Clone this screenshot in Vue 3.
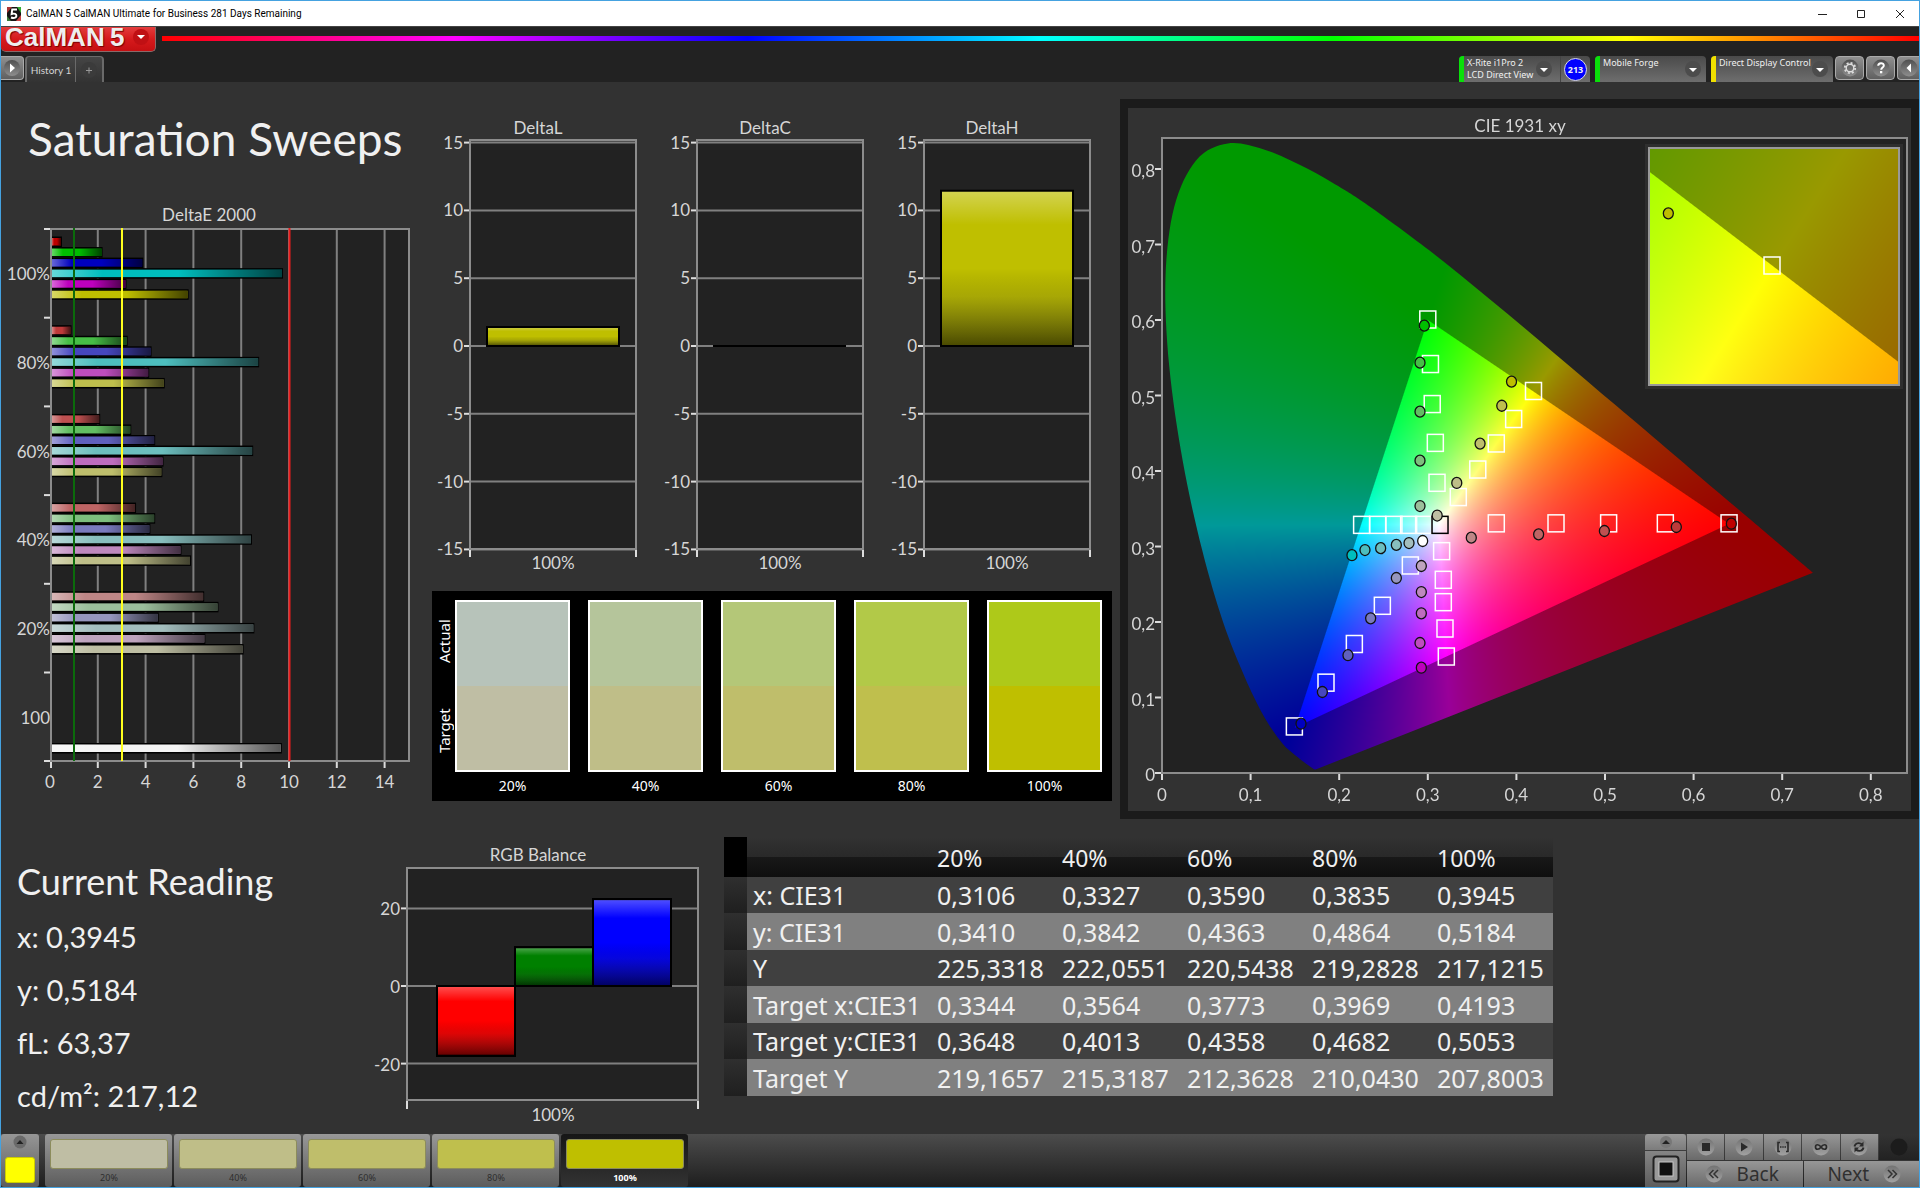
<script setup>
import { onMounted, ref } from 'vue'

const levels = ['20%', '40%', '60%', '80%', '100%']

/* ---------- DeltaE 2000 ---------- */
const deX = v => 50 + 23.9 * v
const deBand = 88.7
const deTop = 229
const floors = {
  r: [0, 58, 80, 100, 134],
  g: [0, 70, 98, 125, 155],
  b: [0, 70, 96, 122, 150],
  c: [0, 77, 108, 136, 163],
  m: [0, 77, 108, 136, 163],
  y: [0, 77, 108, 136, 163]
}
const hueColor = (hue, step) => {
  const low = floors[hue][step]
  const on = { r: 'r', g: 'g', b: 'b', c: 'gb', m: 'rb', y: 'rg' }[hue]
  return `rgb(${['r', 'g', 'b'].map(c => (on.includes(c) ? 190 : low)).join(',')})`
}
const deValues = [
  [0.5, 2.2, 3.9, 9.75, 3.2, 5.8],
  [0.9, 3.25, 4.25, 8.75, 4.15, 4.8],
  [2.1, 3.4, 4.4, 8.5, 4.75, 4.7],
  [3.6, 4.4, 4.2, 8.45, 5.5, 5.9],
  [6.45, 7.05, 4.55, 8.55, 6.5, 8.1]
]
const hues = ['r', 'g', 'b', 'c', 'm', 'y']
const deBars = []
deValues.forEach((row, i) =>
  row.forEach((v, j) => {
    deBars.push({ y: deTop + deBand * i + 7.5 + 10.55 * j, w: 23.9 * v - 2, fill: hueColor(hues[j], i) })
  })
)
deBars.push({ y: deTop + deBand * 5 + 70.5, w: 23.9 * 9.7 - 2, fill: '#f4f4f4' })
const deLabels = ['100%', '80%', '60%', '40%', '20%', '100']
const deTicks = [0, 2, 4, 6, 8, 10, 12, 14]

/* ---------- Delta L / C / H ---------- */
const deltas = [
  { name: 'DeltaL', value: 1.4 },
  { name: 'DeltaC', value: 0.05 },
  { name: 'DeltaH', value: 11.45 }
]
const dTicks = [15, 10, 5, 0, -5, -10, -15]
const dY = v => 236 - 13.56 * v

/* ---------- RGB balance ---------- */
const rgbBars = [
  { x: 67, value: -18, fill: '#ff0000' },
  { x: 145, value: 10, fill: '#008000' },
  { x: 223, value: 22.4, fill: '#0000ff' }
]
const rgbY = v => 144 - 3.88 * v

/* ---------- Colour swatches ---------- */
const swatches = [
  { label: '20%', actual: '#b7c3ba', target: '#bfbea4' },
  { label: '40%', actual: '#b5c59b', target: '#bfbe88' },
  { label: '60%', actual: '#b4c778', target: '#bfbe6b' },
  { label: '80%', actual: '#b2c948', target: '#bfbf4d' },
  { label: '100%', actual: '#aec919', target: '#bfbf00' }
]

/* ---------- Table ---------- */
const rows = [
  ['x: CIE31', '0,3106', '0,3327', '0,3590', '0,3835', '0,3945'],
  ['y: CIE31', '0,3410', '0,3842', '0,4363', '0,4864', '0,5184'],
  ['Y', '225,3318', '222,0551', '220,5438', '219,2828', '217,1215'],
  ['Target x:CIE31', '0,3344', '0,3564', '0,3773', '0,3969', '0,4193'],
  ['Target y:CIE31', '0,3648', '0,4013', '0,4358', '0,4682', '0,5053'],
  ['Target Y', '219,1657', '215,3187', '212,3628', '210,0430', '207,8003']
]

const readings = ['x: 0,3945', 'y: 0,5184', 'fL: 63,37', 'cd/m²: 217,12']

/* ---------- CIE 1931 diagram ---------- */
const W = 783
const H = 703
const cx = x => 34 + 886 * x
const cy = y => 665 - 755 * y
const inset = { x: 521, y: 40, w: 250, h: 237 }
const ix = x => 645 + 4180 * (x - 0.4193)
const iy = y => 158 - 4020 * (y - 0.5053)
const xTicks = ['0', '0,1', '0,2', '0,3', '0,4', '0,5', '0,6', '0,7', '0,8']

const targets = [
  [0.3, 0.6], [0.303, 0.541], [0.305, 0.488], [0.3085, 0.4366], [0.3104, 0.3837],
  [0.4193, 0.5053], [0.3969, 0.4682], [0.3773, 0.4358], [0.3564, 0.4013], [0.3344, 0.3648],
  [0.3773, 0.33], [0.4447, 0.33], [0.5041, 0.33], [0.5681, 0.33], [0.64, 0.33],
  [0.3156, 0.2932], [0.3175, 0.2552], [0.3175, 0.2256], [0.3194, 0.1907], [0.3209, 0.1536],
  [0.2803, 0.2742], [0.2487, 0.2208], [0.2171, 0.1702], [0.1851, 0.119], [0.1494, 0.061],
  [0.2253, 0.328], [0.2434, 0.328], [0.2618, 0.328], [0.2784, 0.328], [0.2953, 0.328]
]
const measured = {
  g: [[0.2961, 0.5925], [0.2912, 0.5435], [0.2912, 0.4786], [0.2912, 0.4137], [0.2912, 0.3536]],
  y: [[0.3945, 0.5184], [0.3835, 0.4864], [0.359, 0.4363], [0.3327, 0.3842], [0.3106, 0.341]],
  r: [[0.6426, 0.3302], [0.5805, 0.3258], [0.4993, 0.3205], [0.4251, 0.3161], [0.3491, 0.3117]],
  m: [[0.2927, 0.1395], [0.2912, 0.1722], [0.2927, 0.2115], [0.2927, 0.2397], [0.2927, 0.2742]],
  b: [[0.1569, 0.0653], [0.181, 0.1073], [0.2099, 0.156], [0.2355, 0.2049], [0.2645, 0.2583]],
  c: [[0.2144, 0.2885], [0.2291, 0.2953], [0.2468, 0.2978], [0.2645, 0.3021], [0.2788, 0.3046]]
}
const dots = Object.entries(measured).flatMap(([hue, list]) =>
  list.map(([x, y], i) => ({ x, y, fill: hueColor(hue, i) }))
)
dots.push({ x: 0.2942, y: 0.3073, fill: '#fff' })

const locus = [
  [0.1741, 0.005], [0.1714, 0.0051], [0.1644, 0.0109], [0.1566, 0.0177], [0.144, 0.0297],
  [0.1355, 0.0399], [0.1241, 0.0578], [0.1096, 0.0868], [0.0913, 0.1327], [0.0687, 0.2007],
  [0.0454, 0.295], [0.0235, 0.4127], [0.0082, 0.5384], [0.0039, 0.6548], [0.0139, 0.7502],
  [0.0389, 0.812], [0.0743, 0.8338], [0.1142, 0.8262], [0.1547, 0.8059], [0.1929, 0.7816],
  [0.2296, 0.7543], [0.3016, 0.6923], [0.3731, 0.6245], [0.4441, 0.5547], [0.5125, 0.4866],
  [0.5752, 0.4242], [0.627, 0.3725], [0.6658, 0.334], [0.6915, 0.3083], [0.719, 0.2809], [0.7347, 0.2653]
]
const gamut = [[0.64, 0.33], [0.3, 0.6], [0.15, 0.06]]

// signed distance to the nearest gamut edge, positive inside
function edgeDistance(x, y, scale) {
  let d = Infinity
  for (let i = 0; i < 3; i++) {
    const [ax, ay] = gamut[i]
    const [bx, by] = gamut[(i + 1) % 3]
    const len = Math.hypot(bx - ax, by - ay)
    d = Math.min(d, (((bx - ax) * (y - ay) - (by - ay) * (x - ax)) / len) * scale)
  }
  return d
}

// linear RGB normalised to its strongest channel, dimmed outside the gamut
function chroma(x, y, scale) {
  const yy = Math.max(y, 0.0001)
  const X = x / yy
  const Z = (1 - x - y) / yy
  const lin = [
    3.2406 * X - 1.5372 - 0.4986 * Z,
    -0.9689 * X + 1.8758 + 0.0415 * Z,
    0.0557 * X - 0.204 + 1.057 * Z
  ].map(v => Math.max(0, v))
  const top = Math.max(...lin)
  const k = 0.6 + 0.4 * Math.min(1, Math.max(0, edgeDistance(x, y, scale) + 0.5))
  return lin.map(v => (255 * k * v) / top)
}

function field(w, h, toXY, scale) {
  const layer = document.createElement('canvas')
  layer.width = w
  layer.height = h
  const ctx = layer.getContext('2d')
  const img = ctx.createImageData(w, h)
  for (let j = 0; j < h; j++) {
    for (let i = 0; i < w; i++) {
      const [x, y] = toXY(i + 0.5, j + 0.5)
      const c = chroma(x, y, scale)
      const o = 4 * (j * w + i)
      img.data[o] = c[0]
      img.data[o + 1] = c[1]
      img.data[o + 2] = c[2]
      img.data[o + 3] = 255
    }
  }
  ctx.putImageData(img, 0, 0)
  return layer
}

const gamutCanvas = ref(null)
onMounted(() => {
  const ctx = gamutCanvas.value.getContext('2d')
  ctx.save()
  ctx.beginPath()
  const p = locus.map(([x, y]) => [cx(x), cy(y)])
  ctx.moveTo(...p[0])
  for (let i = 0; i < p.length - 1; i++) {
    const a = p[Math.max(0, i - 1)]
    const b = p[i]
    const c = p[i + 1]
    const d = p[Math.min(p.length - 1, i + 2)]
    ctx.bezierCurveTo(
      b[0] + (c[0] - a[0]) / 6, b[1] + (c[1] - a[1]) / 6,
      c[0] - (d[0] - b[0]) / 6, c[1] - (d[1] - b[1]) / 6,
      c[0], c[1]
    )
  }
  ctx.closePath()
  ctx.clip()
  ctx.drawImage(field(W, H, (px, py) => [(px - 34) / 886, (665 - py) / 755], 800), 0, 0)
  ctx.restore()
  const { x, y, w, h } = inset
  ctx.fillStyle = '#2e2e2e'
  ctx.fillRect(x - 4, y - 4, w + 8, h + 8)
  ctx.drawImage(
    field(w, h, (px, py) => [0.4193 + (px + x - 645) / 4180, 0.5053 + (158 - py - y) / 4020], 4100),
    x, y
  )
})
</script>

<template>
  <div class="window">
    <header class="titlebar">
      <svg class="app-icon" width="14" height="14" viewBox="0 0 14 14">
        <rect width="14" height="14" fill="#141414" />
        <path d="M0 0h5L0 6z" fill="#a33" />
        <path d="M14 0v6L10 0z" fill="#3a3" />
        <path d="M0 14v-5l4 5z" fill="#3a7a3a" />
        <path d="M14 14H9l5-6z" fill="#c44" />
        <path d="M10 2.500H5.200L4.600 7c3-1 5 0 4.800 2-.3 2-3 2.500-5.400 1.500" fill="none" stroke="#fff" stroke-width="1.900" />
      </svg>
      <span class="caption">CalMAN 5 CalMAN Ultimate for Business 281 Days Remaining</span>
      <div class="controls">
        <button aria-label="Minimize"><svg width="10" height="10"><path d="M1 5.500h9" stroke="#222" /></svg></button>
        <button aria-label="Maximize"><svg width="10" height="10"><path d="M1.500 1.500h7v7h-7z" fill="none" stroke="#222" /></svg></button>
        <button aria-label="Close"><svg width="10" height="10"><path d="M1 1l8 8M9 1l-8 8" stroke="#222" /></svg></button>
      </div>
    </header>

    <div class="brandbar">
      <button class="brand">
        <span class="brand-name">CalMAN&thinsp;5</span>
        <svg width="18" height="18" viewBox="0 0 18 18"><circle cx="9" cy="9" r="8" fill="#c01014" /><path d="M5 7h8l-4 4z" fill="#fff" /></svg>
      </button>
      <div class="spectrum"></div>
    </div>

    <div class="toolbar">
      <button class="tool open" aria-label="Open panel">
        <svg width="18" height="18" viewBox="0 0 18 18"><circle cx="9" cy="9" r="8" fill="url(#knob)" /><path d="M7 4.500v9l5-4.500z" fill="#fff" /></svg>
      </button>
      <nav class="tabs">
        <button class="tab">History 1</button>
        <button class="tab add" aria-label="Add tab">
          <svg width="18" height="18" viewBox="0 0 18 18"><circle cx="9" cy="9" r="8" fill="#3b3b3b" /><path d="M6 9.500h6M9 6.500v6" stroke="#999" /></svg>
        </button>
      </nav>
      <div class="devices">
        <button class="device meter">
          <i class="led green"></i>
          <span class="device-name">X-Rite i1Pro 2<br>LCD Direct View</span>
          <svg class="drop" width="18" height="18" viewBox="0 0 18 18"><circle cx="9" cy="9" r="8" fill="#4c4c4c" /><path d="M5 8h8l-4 4z" fill="#fff" /></svg>
          <span class="count"><b>213</b></span>
        </button>
        <button class="device source">
          <i class="led green"></i>
          <span class="device-name">Mobile Forge</span>
          <svg class="drop" width="18" height="18" viewBox="0 0 18 18"><circle cx="9" cy="9" r="8" fill="#4c4c4c" /><path d="M5 8h8l-4 4z" fill="#fff" /></svg>
        </button>
        <button class="device display">
          <i class="led yellow"></i>
          <span class="device-name">Direct Display Control</span>
          <svg class="drop" width="18" height="18" viewBox="0 0 18 18"><circle cx="9" cy="9" r="8" fill="#4c4c4c" /><path d="M5 8h8l-4 4z" fill="#fff" /></svg>
        </button>
        <button class="tool" aria-label="Settings">
          <svg width="18" height="18" viewBox="0 0 18 18">
            <circle cx="9" cy="9" r="8.500" fill="url(#knob)" />
            <circle cx="9" cy="9" r="3.800" fill="none" stroke="#ddd" stroke-width="1.400" />
            <circle cx="9" cy="9" r="5.200" fill="none" stroke="#ddd" stroke-width="1.800" stroke-dasharray="2 2.080" />
          </svg>
        </button>
        <button class="tool" aria-label="Help">
          <svg width="18" height="18" viewBox="0 0 18 18">
            <circle cx="9" cy="9" r="8.500" fill="url(#knob)" />
            <path d="M6.200 6.800C6.300 3.200 12 3.400 11.800 6.700c-.1 1.800-2.600 1.900-2.600 4" fill="none" stroke="#fff" stroke-width="2" />
            <rect x="8" y="12" width="2.300" height="2.300" fill="#fff" />
          </svg>
        </button>
        <button class="tool last" aria-label="Collapse">
          <svg width="18" height="18" viewBox="0 0 18 18"><circle cx="9" cy="9" r="8.500" fill="url(#knob)" /><path d="M11 4.500v9L6.500 9z" fill="#fff" /></svg>
        </button>
      </div>
    </div>

    <main class="workspace">
      <section class="upper">
        <div class="col-left">
          <h1>Saturation Sweeps</h1>
          <svg class="chart" viewBox="1 200 423 600">
            <defs>
              <linearGradient id="shadeH">
                <stop offset="0" stop-color="#fff" stop-opacity=".4" />
                <stop offset=".22" stop-color="#fff" stop-opacity="0" />
                <stop offset=".55" stop-color="#000" stop-opacity="0" />
                <stop offset="1" stop-color="#000" stop-opacity=".65" />
              </linearGradient>
              <linearGradient id="shadeV" x2="0" y2="1">
                <stop offset="0" stop-color="#fff" stop-opacity=".32" />
                <stop offset=".22" stop-color="#fff" stop-opacity="0" />
                <stop offset=".5" stop-color="#000" stop-opacity="0" />
                <stop offset=".68" stop-color="#222" stop-opacity=".15" />
                <stop offset="1" stop-color="#000" stop-opacity=".62" />
              </linearGradient>
              <linearGradient id="knob" x2="0" y2="1">
                <stop offset="0" stop-color="#505050" />
                <stop offset="1" stop-color="#8e8e8e" />
              </linearGradient>
            </defs>
            <text x="209" y="221" class="mid">DeltaE 2000</text>
            <rect x="51" y="229" width="358" height="532" class="plot" />
            <g v-for="t in deTicks" :key="t">
              <path v-if="t" :d="`M${deX(t)} 229V761`" class="grid" />
              <path :d="`M${deX(t) + (t ? 0 : 1)} 762v6`" class="tick" />
              <text :x="deX(t)" y="788" class="mid">{{ t }}</text>
            </g>
            <g v-for="(l, i) in deLabels" :key="'l' + i">
              <path :d="`M44 ${deTop + deBand * i}h7`" class="tick" />
              <text x="50" :y="deTop + deBand * (i + 0.5) + 7" class="end">{{ l }}</text>
            </g>
            <path d="M44 761h7" class="tick" />
            <g v-for="(b, i) in deBars" :key="'b' + i">
              <rect x="50" :y="b.y" :width="b.w + 2" height="10.5" fill="#000" />
              <rect x="52" :y="b.y + 1.5" :width="b.w - 1" height="7.5" :fill="b.fill" />
              <rect x="52" :y="b.y + 1.5" :width="b.w - 1" height="7.5" fill="url(#shadeH)" />
            </g>
            <rect x="51" y="229" width="358" height="532" class="frame" />
            <path d="M74 228v533" stroke="#0b6b0b" stroke-width="2" />
            <path d="M122 228v533" stroke="#ffff1e" stroke-width="2" />
            <path d="M289.500 228v533" stroke="#ee1c1c" stroke-width="2" />
          </svg>
        </div>

        <div class="col-mid">
          <div class="deltas">
            <svg v-for="d in deltas" :key="d.name" class="chart" viewBox="0 0 227 465">
              <text x="114" y="24" class="mid">{{ d.name }}</text>
              <rect x="46" y="30" width="166" height="409" class="plot" />
              <g v-for="t in dTicks" :key="t">
                <path :d="`M46 ${dY(t)}h166`" class="grid" />
                <path :d="`M40 ${dY(t)}h6`" class="tick" />
                <text x="39" :y="dY(t) + 6" class="end">{{ t }}</text>
              </g>
              <rect x="46" y="30" width="166" height="409" class="frame" />
              <path d="M46 440v7M212 440v7" class="tick" />
              <g v-if="d.value > 0.5">
                <rect x="63" :y="dY(d.value)" width="132" :height="13.56 * d.value" fill="#bfbf00" />
                <rect x="63" :y="dY(d.value)" width="132" :height="13.56 * d.value" fill="url(#shadeV)" stroke="#000" stroke-width="2" />
              </g>
              <path v-else d="M62 236h133" stroke="#000" stroke-width="2" />
              <text x="129" y="459" class="mid">100%</text>
            </svg>
          </div>

          <div class="compare">
            <div class="sides"><span>Actual</span><span>Target</span></div>
            <figure v-for="s in swatches" :key="s.label">
              <div class="pair">
                <div :style="{ background: s.actual }"></div>
                <div :style="{ background: s.target }"></div>
              </div>
              <figcaption>{{ s.label }}</figcaption>
            </figure>
          </div>
        </div>

        <div class="cie">
          <canvas ref="gamutCanvas" :width="W" :height="H"></canvas>
          <svg class="chart" :viewBox="`0 0 ${W} ${H}`">
            <text x="392" y="24" class="mid">CIE 1931 xy</text>
            <path d="M34 30H779V665H34z" class="frame" />
            <g v-for="(t, i) in xTicks" :key="t">
              <path :d="`M${cx(i / 10)} 666v6`" class="tick" />
              <text :x="cx(i / 10)" y="693" class="mid">{{ t }}</text>
              <path :d="`M27 ${cy(i / 10)}h6`" class="tick" />
              <text x="27" :y="cy(i / 10) + 8" class="end">{{ t }}</text>
            </g>
            <rect v-for="([x, y], i) in targets" :key="'t' + i" :x="cx(x) - 8" :y="cy(y) - 9" width="16" height="17" class="target" />
            <rect :x="cx(0.3138) - 8" :y="cy(0.328) - 9" width="16" height="17" class="target white-point" />
            <ellipse v-for="(d, i) in dots" :key="'d' + i" :cx="cx(d.x)" :cy="cy(d.y)" rx="5" ry="5.5" :fill="d.fill" class="dot" />
            <rect :x="inset.x" :y="inset.y" :width="inset.w" :height="inset.h" class="inset-frame" />
            <rect :x="ix(0.4193) - 9" :y="iy(0.5053) - 9" width="16" height="17" class="target" />
            <ellipse :cx="ix(0.3945) - 1" :cy="iy(0.5184)" rx="5" ry="5.5" fill="#bebe00" class="dot" />
          </svg>
        </div>
      </section>

      <section class="lower">
        <div class="reading">
          <h2>Current Reading</h2>
          <p v-for="r in readings" :key="r">{{ r }}</p>
        </div>

        <svg class="chart balance" viewBox="0 0 344 290">
          <text x="168" y="19" class="mid">RGB Balance</text>
          <rect x="37" y="26" width="291" height="232" class="plot" />
          <g v-for="t in [20, 0, -20]" :key="t">
            <path :d="`M37 ${rgbY(t)}h291`" class="grid" />
            <path :d="`M31 ${rgbY(t)}h6`" class="tick" />
            <text x="30" :y="rgbY(t) + 7" class="end">{{ t }}</text>
          </g>
          <rect x="37" y="26" width="291" height="232" class="frame" />
          <path d="M37 259v8M328 259v8" class="tick" />
          <g v-for="b in rgbBars" :key="b.x" stroke="#000" stroke-width="2">
            <rect :x="b.x" :y="rgbY(Math.max(0, b.value))" width="78" :height="Math.abs(b.value) * 3.88" :fill="b.fill" />
            <rect :x="b.x" :y="rgbY(Math.max(0, b.value))" width="78" :height="Math.abs(b.value) * 3.88" fill="url(#shadeV)" />
          </g>
          <text x="183" y="279" class="mid">100%</text>
        </svg>

        <table>
          <thead>
            <tr>
              <td class="handle"></td>
              <th></th>
              <th v-for="l in levels" :key="l" scope="col">{{ l }}</th>
            </tr>
          </thead>
          <tbody>
            <tr v-for="r in rows" :key="r[0]">
              <td class="handle"></td>
              <th scope="row">{{ r[0] }}</th>
              <td v-for="(v, i) in r.slice(1)" :key="i">{{ v }}</td>
            </tr>
          </tbody>
        </table>
      </section>
    </main>

    <footer class="dock">
      <button class="current" aria-label="Current pattern">
        <svg width="14" height="14" viewBox="0 0 14 14"><circle cx="7" cy="7" r="6.500" fill="#6a6a6a" /><path d="M3.500 9h7L7 5z" fill="#222" /></svg>
        <i></i>
      </button>
      <div class="patterns">
        <button v-for="s in swatches" :key="s.label" :class="{ active: s.label === '100%' }">
          <i :style="{ background: s.target }"></i>
          <span>{{ s.label }}</span>
        </button>
      </div>
      <div class="transport">
        <div class="record">
          <button class="up" aria-label="More">
            <svg width="14" height="14" viewBox="0 0 14 14"><circle cx="7" cy="7" r="6" fill="#777" /><path d="M3 9h8L7 5z" fill="#222" /></svg>
          </button>
          <button class="frame-btn" aria-label="Pattern window">
            <svg width="28" height="28" viewBox="0 0 28 28">
              <rect x="1.500" y="1.500" width="25" height="25" rx="3" fill="#999" stroke="#222" stroke-width="2" />
              <rect x="7" y="7" width="14" height="14" fill="#111" stroke="#c8c8c8" />
            </svg>
          </button>
        </div>
        <div class="grid-btns">
          <div class="icons">
            <button aria-label="Stop"><svg viewBox="0 0 18 18"><circle cx="9" cy="9" r="8.500" fill="url(#disc)" /><rect x="5" y="5" width="8" height="8" fill="#2a2a2a" /></svg></button>
            <button aria-label="Play"><svg viewBox="0 0 18 18"><circle cx="9" cy="9" r="8.500" fill="url(#disc)" /><path d="M6 4.500v9l7-4.500z" fill="#2a2a2a" /></svg></button>
            <button aria-label="Read series"><svg viewBox="0 0 18 18"><circle cx="9" cy="9" r="8.500" fill="url(#disc)" /><path d="M6 4.500H4v9h2M12 4.500h2v9h-2M6 9h1.500m.8 0h1.400m.8 0h1.500" fill="none" stroke="#2a2a2a" stroke-width="1.600" /></svg></button>
            <button aria-label="Continuous"><svg viewBox="0 0 18 18"><circle cx="9" cy="9" r="8.500" fill="url(#disc)" /><path d="M9 9C7 6 3.500 6 3.500 9S7 12 9 9s5.500-3 5.500 0S11 12 9 9z" fill="none" stroke="#2a2a2a" stroke-width="1.700" /></svg></button>
            <button aria-label="Refresh"><svg viewBox="0 0 18 18"><circle cx="9" cy="9" r="8.500" fill="url(#disc)" /><path d="M4.500 8.500C5 5 9.500 4 12 6.500M13.500 9.500C13 13 8.500 14 6 11.500" fill="none" stroke="#2a2a2a" stroke-width="1.800" /><path d="M13.500 3.500v5H9zM4.500 14.500v-5H9z" fill="#2a2a2a" /></svg></button>
            <span class="idle"><svg viewBox="0 0 18 18"><circle cx="9" cy="9" r="8.500" fill="#1c1c1c" /></svg></span>
          </div>
          <div class="nav">
            <button class="back">
              <svg viewBox="0 0 18 18"><circle cx="9" cy="9" r="8.500" fill="url(#disc)" /><path d="M8.500 5l-4 4 4 4M13 5L9 9l4 4" fill="none" stroke="#333" stroke-width="1.500" /></svg>
              <span>Back</span>
            </button>
            <button class="next">
              <span>Next</span>
              <svg viewBox="0 0 18 18"><circle cx="9" cy="9" r="8.500" fill="url(#disc)" /><path d="M5 5l4 4-4 4M9.500 5l4 4-4 4" fill="none" stroke="#333" stroke-width="1.500" /></svg>
            </button>
          </div>
        </div>
        <svg class="defs" width="0" height="0"><defs><linearGradient id="disc" x2="0" y2="1"><stop offset="0" stop-color="#737373" /><stop offset="1" stop-color="#a2a2a2" /></linearGradient></defs></svg>
      </div>
    </footer>
  </div>
</template>

<style>
body {
  margin: 0;
  background: #323232;
}
</style>

<style scoped>
* {
  box-sizing: border-box;
}
.window {
  display: flex;
  flex-direction: column;
  min-height: 100vh;
  border: 1px solid #45a2e0;
  overflow: hidden;
  background: #323232;
  color: #f0f0f0;
  font-family: Lato, Calibri, sans-serif;
}
button {
  margin: 0;
  padding: 0;
  border: 0;
  background: none;
  color: inherit;
  font: inherit;
}
svg {
  display: block;
}
.titlebar {
  display: flex;
  align-items: center;
  height: 25px;
  padding-left: 6px;
  background: #fff;
}
.caption {
  margin-left: 5px;
  color: #000;
  font: 10px/25px Roboto, sans-serif;
}
.controls {
  display: flex;
  margin-left: auto;
}
.controls button {
  display: flex;
  align-items: center;
  justify-content: center;
  width: 39px;
  height: 25px;
}
.brandbar {
  display: flex;
  gap: 6px;
  height: 30px;
  background: #222;
  border-top: 1px solid #444;
}
.brand {
  display: flex;
  align-items: center;
  justify-content: space-between;
  width: 155px;
  height: 25px;
  padding: 0 5px 4px 4px;
  border: solid #8a6a6a;
  border-width: 0 1px 1px 0;
  border-radius: 0 0 5px 5px;
  background: linear-gradient(#e33d3d, #d61a1c 50%, #c50f12);
}
.brand-name {
  color: #eee;
  font: bold 26px/20px "Liberation Sans", Arial, sans-serif;
  text-shadow: 1px 1px 1px #700;
}
.spectrum {
  flex: 1;
  height: 5px;
  margin-top: 9px;
  background: linear-gradient(90deg, #f00, #f0f, #00f, #0ff, #0f0, #ff0, #f00);
}
.toolbar {
  display: flex;
  height: 26px;
  background: #222;
}
.tool {
  display: flex;
  align-items: center;
  justify-content: center;
  width: 29px;
  height: 24px;
  border: 1px solid #aaa;
  border-radius: 4px;
  background: linear-gradient(#8f8f8f, #606060);
}
.tool.open {
  width: 23px;
  border-left: 0;
  border-radius: 0 4px 4px 0;
}
.tool.last {
  width: 22px;
  border-right: 0;
  border-radius: 4px 0 0 4px;
}
.tabs {
  display: flex;
  margin-left: 1px;
  border: solid #6a6a6a;
  border-width: 1px 2px 0;
  border-radius: 4px 4px 0 0;
  background: linear-gradient(#454545, #333);
}
.tab {
  width: 48px;
  color: #d4d4d4;
  font-size: 10px;
  white-space: nowrap;
}
.tab.add {
  display: flex;
  align-items: center;
  justify-content: center;
  width: 27px;
  border-left: 1px solid #6a6a6a;
}
.devices {
  display: flex;
  gap: 2px;
  margin-left: auto;
}
.device {
  display: flex;
  width: 111px;
  margin-right: 3px;
  border-radius: 4px 4px 0 0;
  overflow: hidden;
  background: linear-gradient(#4a4a4a, #6e6e6e);
  text-align: left;
}
.meter {
  width: 131px;
}
.display {
  width: 122px;
  margin-right: 0;
}
.led {
  flex: none;
  width: 5px;
  height: 26px;
}
.green {
  background: #0ae00a;
}
.yellow {
  background: #f0e000;
}
.device-name {
  flex: 1;
  min-width: 0;
  padding: 1px 0 0 3px;
  font: 9px/12px "Noto Sans", sans-serif;
  white-space: nowrap;
}
.drop {
  flex: none;
  margin: 4px;
}
.display .drop {
  margin-left: 0;
}
.count {
  display: flex;
  align-items: center;
  justify-content: center;
  width: 30px;
  height: 26px;
  margin-left: 3px;
  border-left: 1px solid #444;
}
.count b {
  width: 23px;
  height: 23px;
  border: 1px solid #ddd;
  border-radius: 50%;
  background: #00f;
  font: bold 9px/21px "Noto Sans", sans-serif;
  text-align: center;
}
.workspace {
  flex: 1;
  background: #323232;
}
.upper {
  display: grid;
  grid-template-columns: 423fr 696fr 799fr;
  align-items: start;
}
.upper > div {
  min-width: 0;
}
h1 {
  margin: 0;
  padding: 25px 0 29px 27px;
  font-size: 46px;
  font-weight: 400;
  line-height: 64px;
  white-space: nowrap;
}
.chart {
  width: 100%;
  font-size: 17px;
}
.chart text {
  fill: #d6d6d6;
}
.mid {
  text-anchor: middle;
}
.end {
  text-anchor: end;
}
.plot {
  fill: #222;
}
.frame {
  fill: none;
  stroke: #8c8c8c;
  stroke-width: 2;
}
.grid {
  fill: none;
  stroke: #808080;
  stroke-width: 2;
}
.tick {
  fill: none;
  stroke: #ddd;
  stroke-width: 2;
}
.deltas {
  display: flex;
  padding: 28px 15px 0 0;
}
.deltas .chart {
  flex: 1;
  min-width: 0;
}
.compare {
  display: flex;
  gap: 18px;
  height: 210px;
  margin: 16px 8px 0;
  padding: 9px 10px 0 1px;
  background: #000;
  color: #fff;
}
.sides {
  display: flex;
  flex-direction: column;
  gap: 8px;
  width: 22px;
  height: 172px;
  margin-right: -18px;
}
.sides span {
  flex: 1;
  font: 15px/22px "Noto Sans", sans-serif;
  text-align: center;
  writing-mode: vertical-rl;
  transform: rotate(180deg);
}
figure {
  flex: 1;
  margin: 0;
}
.pair {
  height: 172px;
  border: 2px solid #fff;
}
.pair div {
  height: 84px;
}
figcaption {
  font: 14px/28px "Noto Sans", sans-serif;
  text-align: center;
}
.cie {
  display: grid;
  margin-top: 17px;
  border: 8px solid #1b1b1b;
  border-top-width: 9px;
  background: linear-gradient(#222, #222) 34px 30px / calc(100% - 38px) calc(100% - 68px) no-repeat #323232;
}
.cie > * {
  grid-area: 1 / 1;
  width: 100%;
}
.target {
  fill: none;
  stroke: #fff;
  stroke-width: 1.5;
}
.white-point {
  stroke: #000;
}
.dot {
  stroke: #111;
  stroke-width: 1.3;
}
.inset-frame {
  fill: none;
  stroke: #999;
  stroke-width: 2;
}
.lower {
  display: flex;
  align-items: flex-start;
}
.reading {
  width: 369px;
  padding: 33px 0 0 16px;
}
h2 {
  margin: 0;
  font-size: 36px;
  font-weight: 400;
  line-height: 58px;
}
p {
  margin: 0;
  font-size: 29px;
  line-height: 53px;
}
.balance {
  width: 344px;
  margin-top: 23px;
}
table {
  width: 829px;
  margin: 18px 0 0 10px;
  border-collapse: collapse;
  table-layout: fixed;
  font: 25px/36px "Noto Sans", sans-serif;
  white-space: nowrap;
}
th,
td {
  width: 125px;
  height: 36px;
  padding: 0;
  font-weight: 400;
  text-align: left;
}
th:nth-child(2) {
  width: 190px;
  padding-left: 6px;
}
th:last-child,
td:last-child {
  width: 116px;
}
td.handle {
  width: 23px;
  background: linear-gradient(#2f2f2f, #1f1f1f);
}
thead tr {
  background: linear-gradient(#323232, #292929 50%, #181818 50%, #0e0e0e);
}
thead th {
  height: 40px;
  padding-top: 2px;
  font-size: 23px;
}
thead td.handle {
  background: #000;
}
tbody tr {
  background: #404040;
}
tbody tr:nth-child(even) {
  background: #808080;
}
tbody tr:nth-child(even) td {
  height: 37px;
}
.dock {
  display: flex;
  height: 53px;
  background: linear-gradient(#4c4c4c, #1e1e1e);
}
.current {
  display: flex;
  flex-direction: column;
  align-items: center;
  justify-content: space-between;
  width: 38px;
  padding: 1px 0 4px;
  border-radius: 3px;
  background: linear-gradient(#969696, #5c5c5c);
}
.current i {
  width: 30px;
  height: 26px;
  border: 1px solid #cc0;
  border-radius: 3px;
  background: #ff0;
}
.patterns {
  display: flex;
  gap: 2px;
  margin-left: 6px;
}
.patterns button {
  display: flex;
  flex-direction: column;
  width: 127px;
  padding: 5px 4px 0 5px;
  border-radius: 3px;
  background: linear-gradient(#989898, #5c5c5c);
  color: #2e2e2e;
  font: 9px/18px "Noto Sans", sans-serif;
}
.patterns i {
  height: 31px;
  border: 1px solid #8c8c5c;
  border-radius: 3px;
}
.patterns .active {
  background: linear-gradient(#161616, #333);
  color: #fff;
  font-weight: 700;
}
.transport {
  display: flex;
  gap: 1px;
  margin-left: auto;
}
.defs {
  margin-left: -1px;
}
.record {
  display: flex;
  flex-direction: column;
  gap: 1px;
  width: 41px;
}
.record button {
  display: flex;
  align-items: center;
  justify-content: center;
  background: linear-gradient(#999, #7c7c7c);
}
.record .up {
  height: 16px;
  border-radius: 3px 3px 0 0;
}
.record .frame-btn {
  flex: 1;
  background: linear-gradient(#858585, #5c5c5c);
}
.grid-btns {
  display: flex;
  flex-direction: column;
  gap: 1px;
  width: 232px;
}
.icons,
.nav {
  display: flex;
  gap: 1px;
  height: 26px;
}
.icons > *,
.nav button {
  display: flex;
  flex: 1;
  align-items: center;
  justify-content: center;
  background: linear-gradient(#979797, #6a6a6a);
}
.icons svg,
.nav svg {
  width: 18px;
  height: 18px;
}
.icons .idle {
  flex: none;
  width: 40px;
  background: linear-gradient(#333, #222);
}
.nav button {
  gap: 14px;
  color: #303030;
  font: 19px/26px "Noto Sans", sans-serif;
}
.nav .back {
  padding-right: 6px;
}
.nav .next {
  padding-left: 6px;
}
</style>
